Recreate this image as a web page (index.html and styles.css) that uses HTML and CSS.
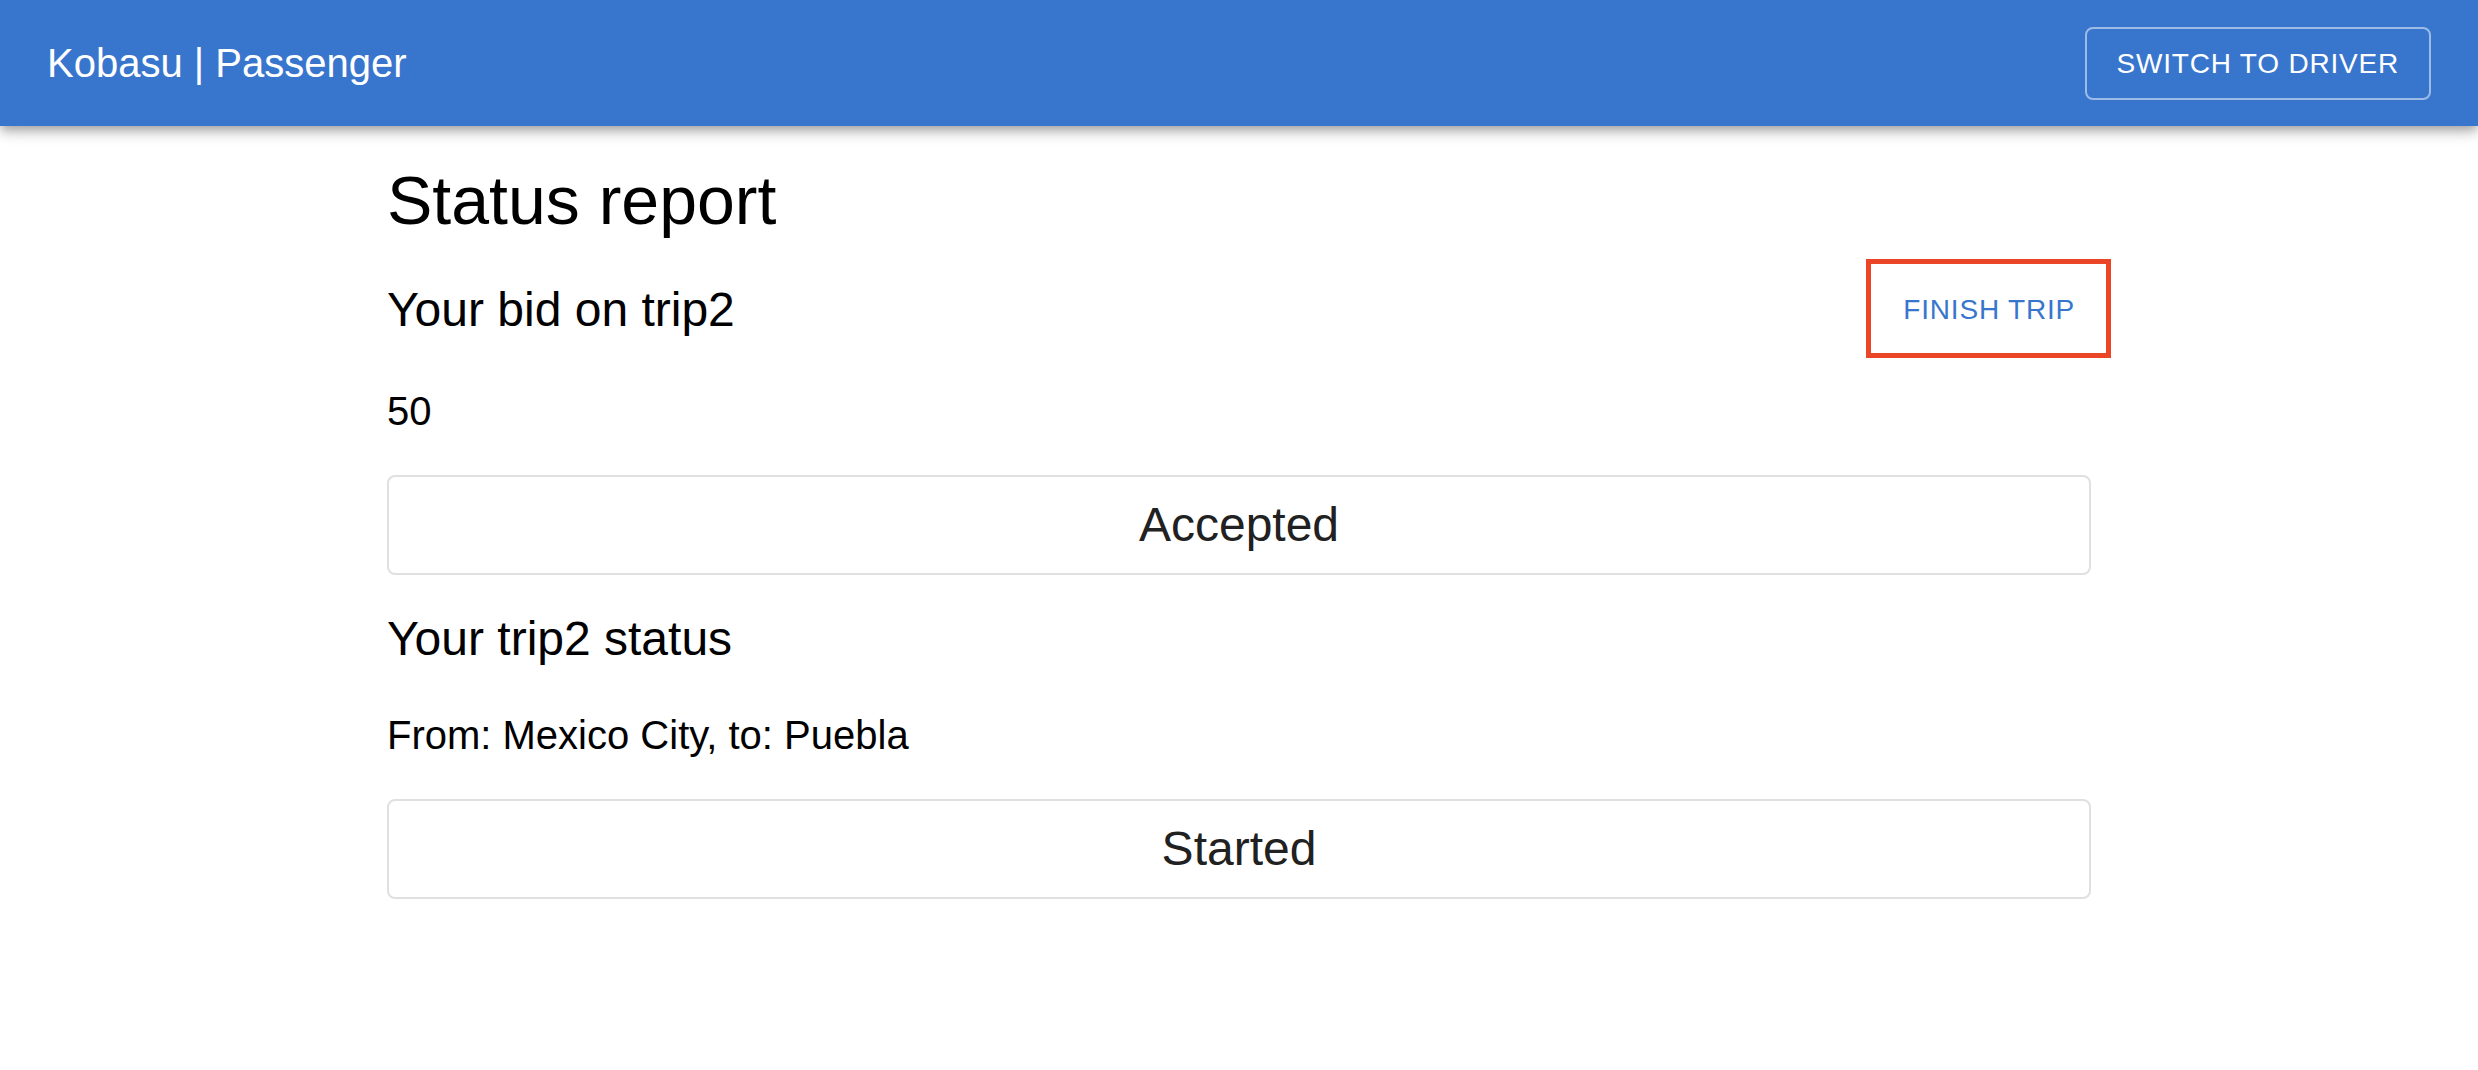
FILE: index.html
```html
<!DOCTYPE html>
<html lang="en">
<head>
<meta charset="utf-8">
<title>Kobasu | Passenger</title>
<link rel="stylesheet" href="styles.css">
</head>
<body>
<header class="appbar">
  <div class="toolbar">
    <div class="brand">Kobasu | Passenger</div>
    <button class="btn-outline">SWITCH TO DRIVER</button>
  </div>
</header>
<main class="container">
  <h1 class="title">Status report</h1>
  <div class="row">
    <h2 class="subtitle">Your bid on trip2</h2>
    <button class="btn-text annotated">FINISH TRIP</button>
  </div>
  <p class="body">50</p>
  <div class="status-box">Accepted</div>
  <h2 class="subtitle">Your trip2 status</h2>
  <p class="body">From: Mexico City, to: Puebla</p>
  <div class="status-box">Started</div>
</main>
</body>
</html>
```
FILE: styles.css
```css
html, body {
  margin: 0;
  padding: 0;
  background: #ffffff;
}
body {
  font-family: "Liberation Sans", Arial, Helvetica, sans-serif;
  color: #000;
}
.appbar {
  position: relative;
  z-index: 2;
  background: #3876ce;
  color: #fff;
  box-shadow: 0 4px 8px -2px rgba(0,0,0,0.2), 0 8px 10px 0 rgba(0,0,0,0.14), 0 2px 20px 0 rgba(0,0,0,0.12);
}
.toolbar {
  height: 126px;
  padding: 0 47px 0 47px;
  display: flex;
  align-items: center;
  justify-content: space-between;
}
.brand {
  font-size: 40px;
  line-height: 64px;
  font-weight: 400;
}
.btn-outline {
  font-family: inherit;
  font-size: 28px;
  line-height: 49px;
  letter-spacing: 0.8px;
  color: #fff;
  background: transparent;
  border: 2px solid rgba(255,255,255,0.5);
  border-radius: 8px;
  padding: 10px 30px;
  cursor: pointer;
}
.container {
  max-width: 1800px;
  margin: 0 auto;
  padding: 32px 48px 0;
  box-sizing: border-box;
  display: flex;
  flex-direction: column;
  gap: 32px;
}
.title {
  margin: 0;
  font-size: 68px;
  line-height: 84px;
  font-weight: 400;
}
.row {
  display: flex;
  align-items: center;
  justify-content: space-between;
  min-height: 73px;
  margin-top: -1px;
  margin-bottom: 1px;
}
.subtitle {
  margin: 0;
  font-size: 48px;
  line-height: 64px;
  font-weight: 400;
}
.body {
  margin: 0;
  font-size: 40px;
  line-height: 64px;
}
.btn-text {
  font-family: inherit;
  font-size: 28px;
  line-height: 49px;
  letter-spacing: 0.8px;
  color: #3876ce;
  background: transparent;
  border: none;
  border-radius: 8px;
  padding: 12px 16px;
  cursor: pointer;
}
.annotated {
  position: relative;
}
.annotated::after {
  content: "";
  position: absolute;
  top: -14px;
  bottom: -12px;
  left: -21px;
  right: -20px;
  border: 5px solid #eb4528;
  pointer-events: none;
}
.status-box {
  border: 2px solid #e0e0e0;
  border-radius: 8px;
  padding: 16px 15px;
  text-align: center;
  font-size: 48px;
  line-height: 64px;
  color: #212121;
}
```
